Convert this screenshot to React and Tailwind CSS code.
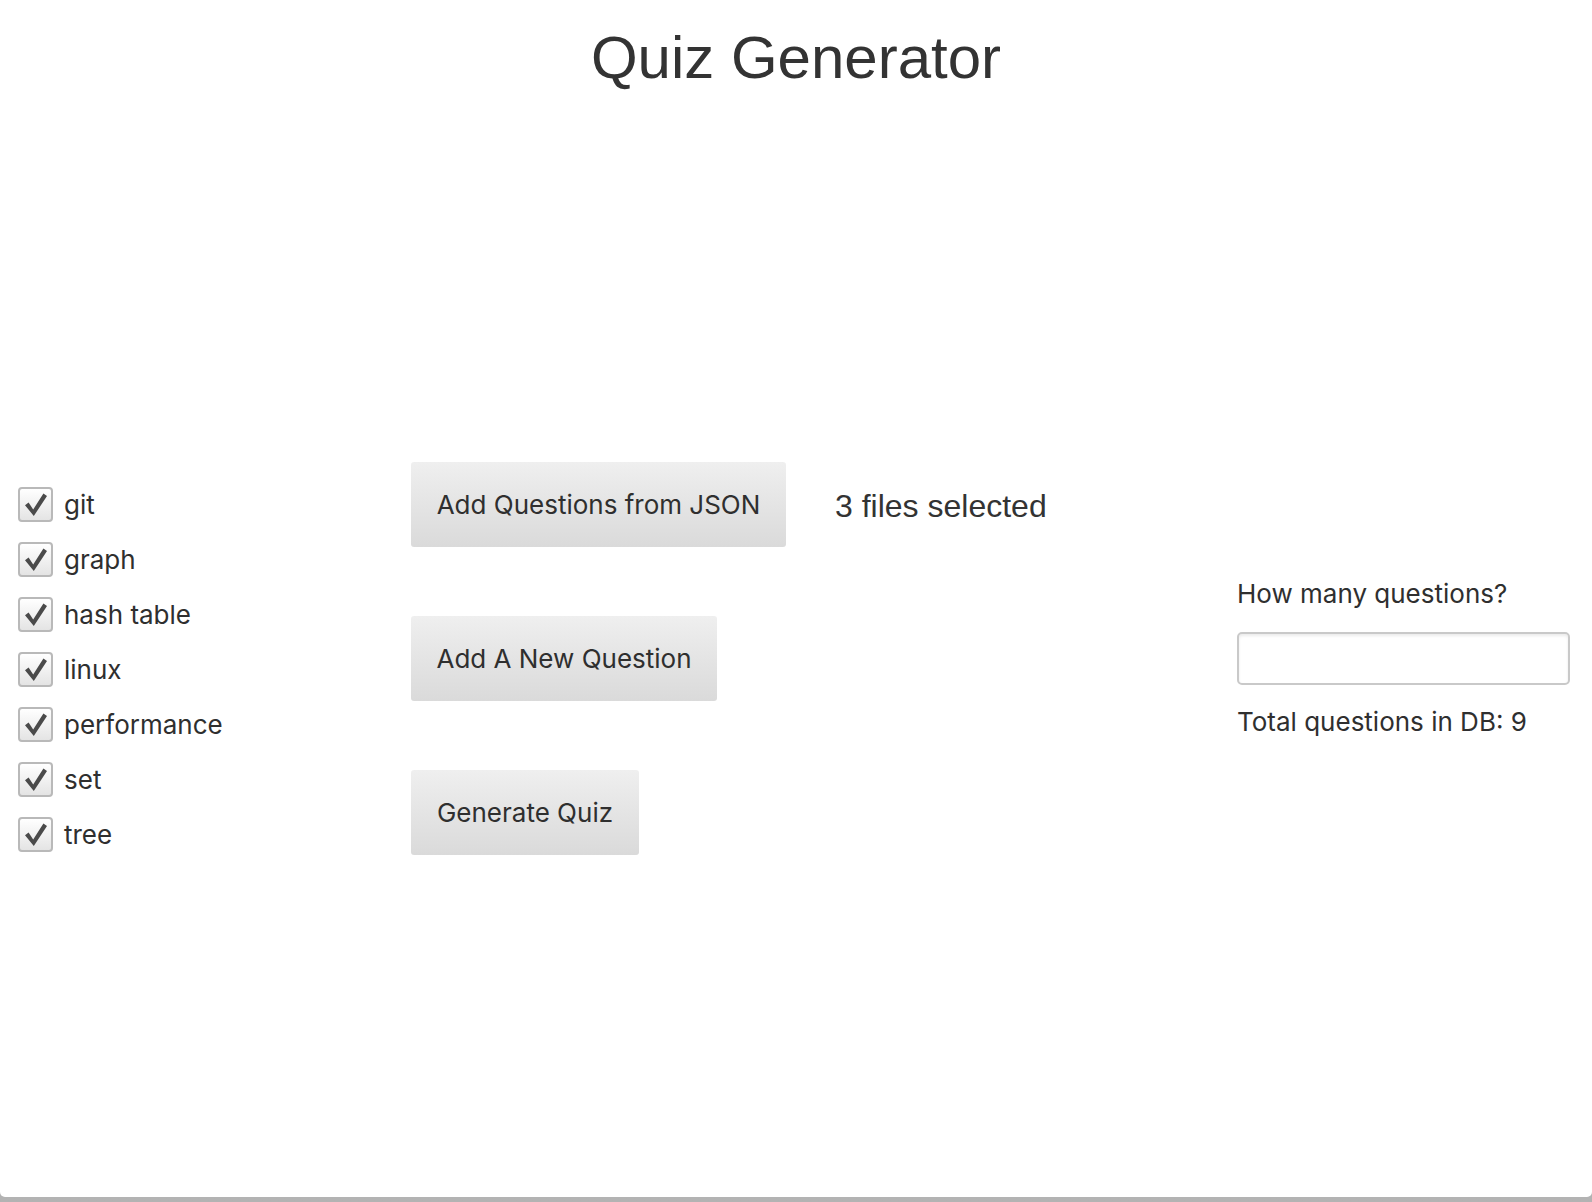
import React from "react";

const topics = ["git", "graph", "hash table", "linux", "performance", "set", "tree"];

function Check() {
  return (
    <div className="w-[35px] h-[35px] shrink-0 rounded-[4px] border-2 border-[#b9b9b9] bg-gradient-to-b from-[#ffffff] to-[#e4e4e4] flex items-center justify-center">
      <svg width="31" height="31" viewBox="0 0 31 31">
        <path d="M5 16.2 L8.6 13.6 L13.2 20.4 L23.4 4.6 L27 7 L13.8 27 Z" fill="#4a4a4a" />
      </svg>
    </div>
  );
}

function Btn({ children, w }) {
  return (
    <button
      className={`${w} h-[85px] rounded-[3px] bg-gradient-to-b from-[#efefef] to-[#dadada] text-[#2f2f2f] text-[26px] text-center`}
      style={{ fontFamily: "Inter, 'Noto Sans', sans-serif" }}
    >
      {children}
    </button>
  );
}

export default function App() {
  return (
    <div className="w-full h-[1202px] bg-gradient-to-b from-[#8c8c8c] to-[#b3b3b3] flex flex-col overflow-hidden">
      <div className="bg-white h-[1197px] rounded-b-[5px] flex flex-col text-[#333]">
        <h1
          className="text-center text-[60px] leading-[69px] pt-[23px] text-[#333]"
          style={{ fontFamily: "'Liberation Sans', Arial, sans-serif" }}
        >
          Quiz Generator
        </h1>
        <div className="flex items-start mt-[370px]" style={{ fontFamily: "Inter, 'Noto Sans', sans-serif" }}>
          <div className="w-[411px] pl-[18px] mt-[15px] flex flex-col">
            {topics.map((t) => (
              <label key={t} className="h-[55px] flex items-center gap-[11px] text-[26px] text-[#2f2f2f]">
                <Check />
                <span>{t}</span>
              </label>
            ))}
          </div>
          <div className="flex flex-col gap-[69px]">
            <div className="flex items-center gap-[49px]">
              <Btn w="w-[375px]">Add Questions from JSON</Btn>
              <span
                className="text-[32px] text-[#333] mt-[2px]"
                style={{ fontFamily: "'Liberation Sans', Arial, sans-serif" }}
              >
                3 files selected
              </span>
            </div>
            <div>
              <Btn w="w-[306px]">Add A New Question</Btn>
            </div>
            <div>
              <Btn w="w-[228px]">Generate Quiz</Btn>
            </div>
          </div>
          <div className="ml-auto mr-[22px] w-[333px] mt-[117px] flex flex-col text-[26px] text-[#2f2f2f]">
            <div className="leading-[30px]">How many questions?</div>
            <input
              type="text"
              className="mt-[23px] h-[53px] w-full rounded-[5px] border-2 border-[#c9c9c9] bg-white shadow-[inset_0_2px_3px_rgba(0,0,0,0.08)] outline-none"
            />
            <div className="leading-[30px] mt-[22px]">Total questions in DB: 9</div>
          </div>
        </div>
      </div>
    </div>
  );
}
